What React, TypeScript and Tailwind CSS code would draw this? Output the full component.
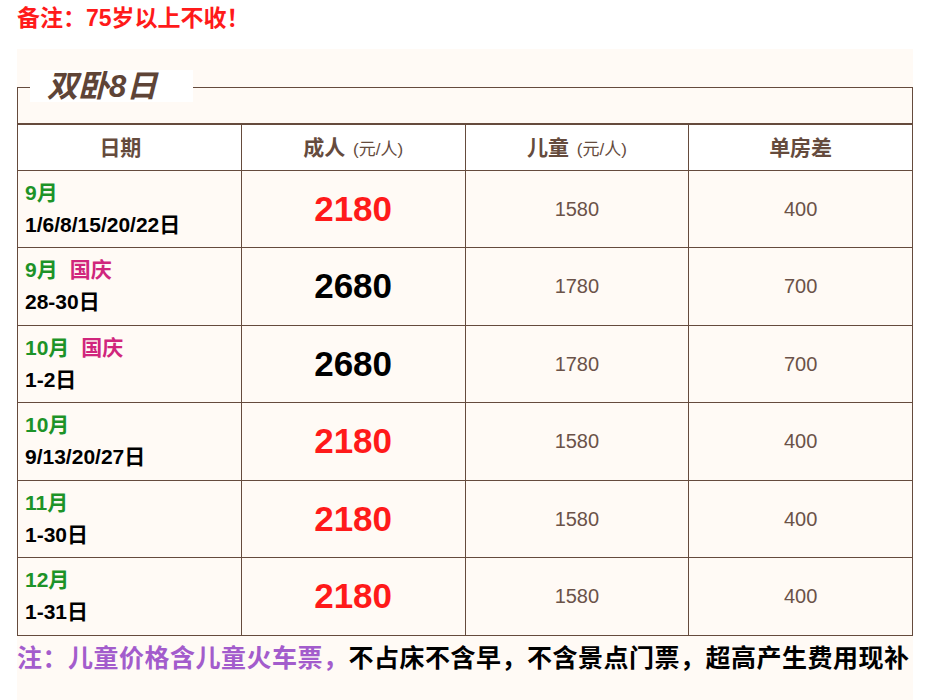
import React from "react";

type Row = {
  month: string;
  holiday?: string;
  days: string;
  adult: string;
  hot: boolean;
  child: string;
  single: string;
};

const rows: Row[] = [
  { month: "9月", days: "1/6/8/15/20/22日", adult: "2180", hot: true, child: "1580", single: "400" },
  { month: "9月", holiday: "国庆", days: "28-30日", adult: "2680", hot: false, child: "1780", single: "700" },
  { month: "10月", holiday: "国庆", days: "1-2日", adult: "2680", hot: false, child: "1780", single: "700" },
  { month: "10月", days: "9/13/20/27日", adult: "2180", hot: true, child: "1580", single: "400" },
  { month: "11月", days: "1-30日", adult: "2180", hot: true, child: "1580", single: "400" },
  { month: "12月", days: "1-31日", adult: "2180", hot: true, child: "1580", single: "400" },
];

const font = "font-['Liberation_Sans','Noto_Sans_CJK_SC',sans-serif]";

export default function App() {
  return (
    <div className={`min-h-[700px] bg-white ${font}`}>
      {/* 顶部提示 */}
      <div className="h-[49px] px-[17px] pt-[3px] text-[23px] font-bold leading-[30px] text-[#ff1a1a]">
        备注：75岁以上不收！
      </div>

      <div className="mx-[17px] w-[896px] bg-[#fffaf5] pt-[38px] pb-[60px]">
        {/* 标题框 */}
        <div className="relative h-[36px] border-x border-t border-[#654b3d]">
          <div className="absolute left-[12px] top-[-18px] flex h-[32px] w-[163px] items-center bg-white pl-[17px] text-[31px] font-bold italic leading-none text-[#5e4437]">
            双卧8日
          </div>
        </div>

        <table className="w-full table-fixed border-collapse border-t-2 border-[#654b3d]">
          <thead>
            <tr className="h-[46px] bg-white text-[#654b3d]">
              <th className="border border-t-0 border-[#654b3d] pr-[18px] text-[21px] font-bold">日期</th>
              <th className="border border-t-0 border-[#654b3d] text-[21px] font-bold">
                成人 <span className="ml-[2px] text-[17px] font-normal">(元/人)</span>
              </th>
              <th className="border border-t-0 border-[#654b3d] text-[21px] font-bold">
                儿童 <span className="ml-[2px] text-[17px] font-normal">(元/人)</span>
              </th>
              <th className="border border-t-0 border-[#654b3d] text-[21px] font-bold">单房差</th>
            </tr>
          </thead>
          <tbody>
            {rows.map((r, i) => (
              <tr key={i} className="h-[77.5px]">
                <td className="border border-[#654b3d] pl-[7px] text-[21px] font-bold leading-[32px]">
                  <div>
                    <span className="text-[#1d9328]">{r.month}</span>
                    {r.holiday && <span className="ml-[12px] text-[#d0267c]">{r.holiday}</span>}
                  </div>
                  <div className="text-black">{r.days}</div>
                </td>
                <td
                  className={`border border-[#654b3d] text-center text-[35px] font-bold ${
                    r.hot ? "text-[#ff1a1a]" : "text-black"
                  }`}
                >
                  {r.adult}
                </td>
                <td className="border border-[#654b3d] text-center text-[20px] text-[#6b5248]">{r.child}</td>
                <td className="border border-[#654b3d] text-center text-[20px] text-[#6b5248]">{r.single}</td>
              </tr>
            ))}
          </tbody>
        </table>

        <p className="mt-[6px] whitespace-nowrap text-[25px] font-bold leading-[32px] tracking-[0.5px]">
          <span className="text-[#a35ccc]">注：儿童价格含儿童火车票，</span>
          <span className="text-black">不占床不含早，不含景点门票，超高产生费用现补</span>
        </p>
      </div>
    </div>
  );
}
